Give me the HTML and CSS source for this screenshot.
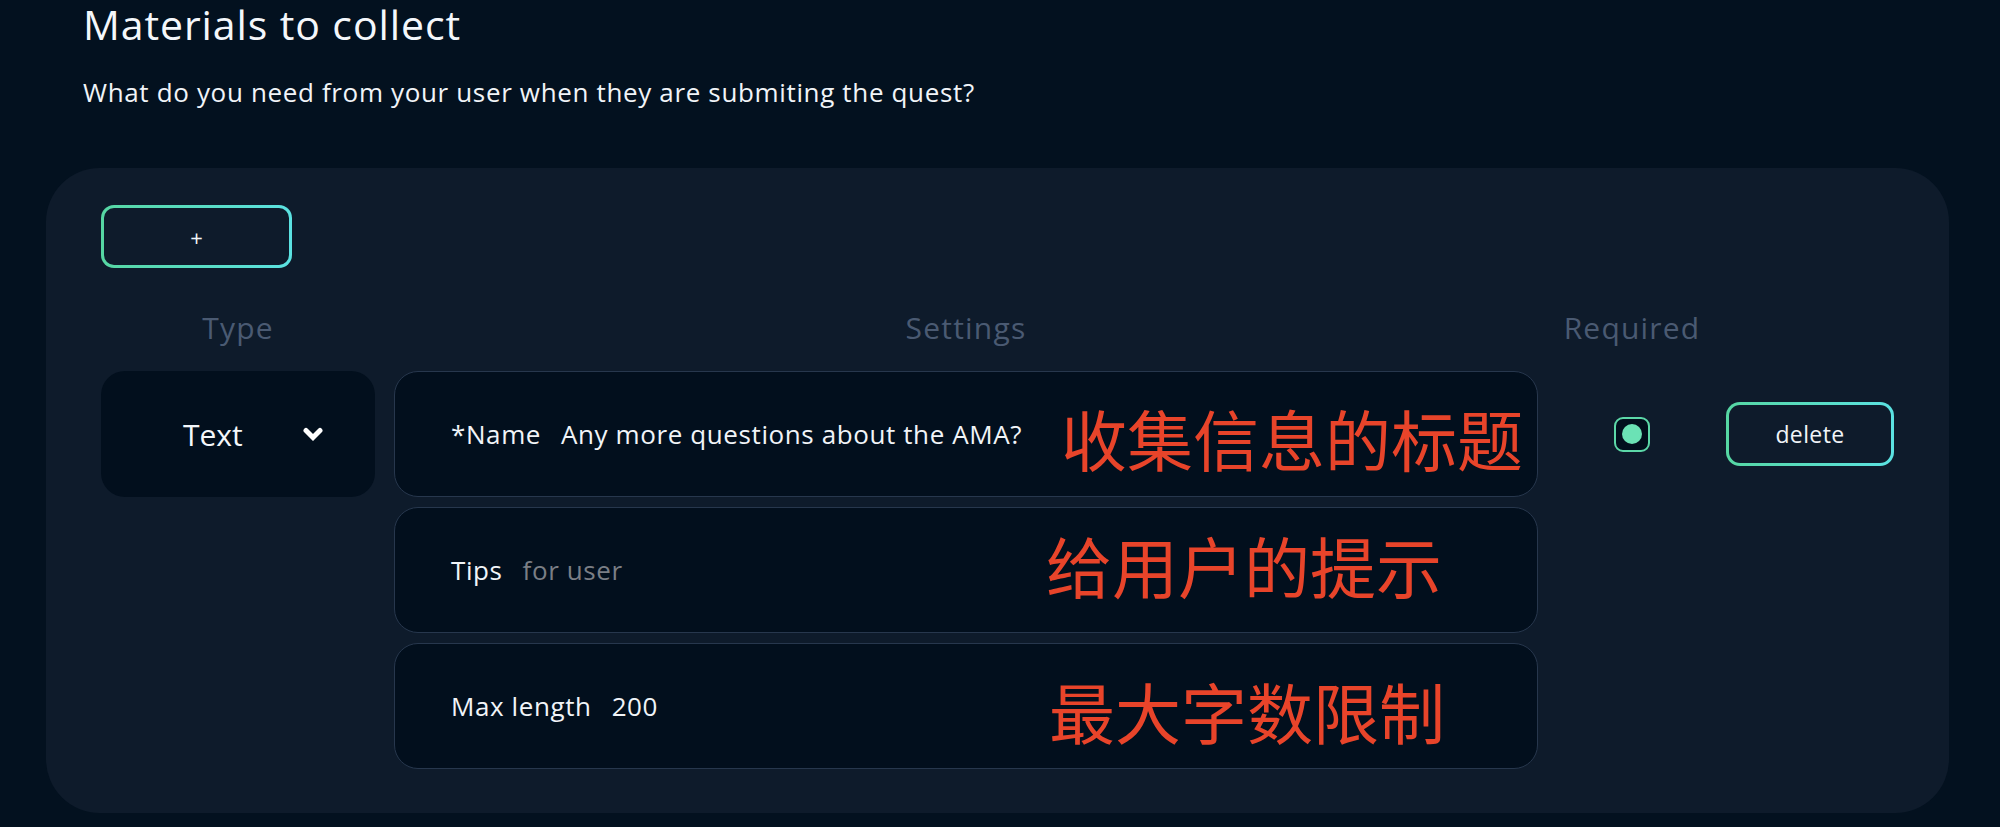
FILE: index.html
```html
<!DOCTYPE html>
<html lang="en">
<head>
<meta charset="utf-8">
<title>Materials to collect</title>
<link rel="stylesheet" href="styles.css">
</head>
<body>
  <header class="intro">
    <h1 class="title">Materials to collect</h1>
    <p class="subtitle">What do you need from your user when they are submiting the quest?</p>
  </header>

  <section class="panel">
    <button class="btn-outline btn-add" type="button">+</button>

    <div class="grid">
      <div class="col-head">Type</div>
      <div class="col-head">Settings</div>
      <div class="col-head">Required</div>
      <div></div>

      <div class="type-select">
        <span class="type-label">Text</span>
        <svg class="chevron" viewBox="0 0 20 14" width="20" height="14" aria-hidden="true">
          <path d="M3 3.5 L10 10.5 L17 3.5" fill="none" stroke="#ffffff" stroke-width="5" stroke-linecap="round" stroke-linejoin="miter"/>
        </svg>
      </div>

      <div class="settings">
        <div class="field">
          <span class="field-label">*Name</span>
          <span class="field-value">Any more questions about the AMA?</span>
          <span class="note note-1">收集信息的标题</span>
        </div>
        <div class="field">
          <span class="field-label">Tips</span>
          <span class="field-value placeholder">for user</span>
          <span class="note note-2">给用户的提示</span>
        </div>
        <div class="field">
          <span class="field-label">Max length</span>
          <span class="field-value">200</span>
          <span class="note note-3">最大字数限制</span>
        </div>
      </div>

      <div class="required-cell">
        <span class="checkbox"><span class="checkbox-dot"></span></span>
      </div>

      <div class="delete-cell">
        <button class="btn-outline btn-delete" type="button">delete</button>
      </div>
    </div>
  </section>
</body>
</html>
```

FILE: styles.css
```css
* {
  box-sizing: border-box;
}

html,
body {
  margin: 0;
  padding: 0;
}

body {
  background: #03111f;
  color: #f1f4f8;
  font-family: "Open Sans", "Noto Sans", "Noto Sans CJK SC", sans-serif;
  width: 2000px;
  height: 827px;
  overflow: hidden;
}

.intro {
  padding-left: 83px;
  padding-top: 2px;
}

.title {
  margin: 0;
  font-size: 41px;
  line-height: 44px;
  font-weight: 400;
  letter-spacing: 0.9px;
  color: #f4f7fb;
}

.subtitle {
  margin: 30px 0 0;
  font-size: 26px;
  line-height: 32px;
  font-weight: 400;
  letter-spacing: 0.65px;
  color: #f1f4f8;
}

.panel {
  margin: 60px 0 0 46px;
  width: 1903px;
  height: 645px;
  background: #0e1b2b;
  border-radius: 54px;
  padding: 37px 0 0 55px;
}

.btn-outline {
  font-family: "Open Sans", "Noto Sans", sans-serif;
  color: #f1f4f8;
  border: 3px solid transparent;
  background:
    linear-gradient(#0e1b2b, #0e1b2b) padding-box,
    linear-gradient(90deg, #56d7a3, #5be2e2) border-box;
  cursor: pointer;
  padding: 0;
  display: flex;
  align-items: center;
  justify-content: center;
}

.btn-add {
  width: 191px;
  height: 63px;
  border-radius: 13px;
  font-size: 22px;
  line-height: 1;
}

.grid {
  display: grid;
  grid-template-columns: 274px 1144px 150px 168px;
  column-gap: 19px;
  margin-top: 40px;
}

.col-head {
  text-align: center;
  font-size: 30px;
  line-height: 40px;
  letter-spacing: 1.2px;
  color: #4a5a72;
  margin-bottom: 23px;
}

.type-select {
  height: 126px;
  background: #020f1d;
  border-radius: 24px;
  display: flex;
  align-items: center;
  justify-content: space-between;
  padding: 0 52px 0 82px;
}

.type-label {
  font-size: 30px;
  color: #f4f7fb;
}

.chevron {
  display: block;
}

.settings {
  display: flex;
  flex-direction: column;
  gap: 10px;
}

.field {
  position: relative;
  height: 126px;
  background: #020f1d;
  border: 1px solid #27374d;
  border-radius: 24px;
  display: flex;
  align-items: center;
  gap: 20px;
  padding-left: 56px;
  font-size: 26px;
  letter-spacing: 0.6px;
}

.field-label {
  color: #f1f4f8;
}

.field-value {
  color: #f1f4f8;
}

.placeholder {
  color: #7a7e85;
}

.note {
  position: absolute;
  font-family: "Noto Sans CJK SC", sans-serif;
  font-size: 66px;
  line-height: 66px;
  letter-spacing: 0;
  color: #e8442a;
  white-space: nowrap;
}

.note-1 {
  left: 666px;
  top: 32px;
}

.note-2 {
  left: 651px;
  top: 23px;
}

.note-3 {
  left: 654px;
  top: 33px;
}

.required-cell {
  height: 126px;
  display: flex;
  align-items: center;
  justify-content: center;
}

.checkbox {
  width: 36px;
  height: 35px;
  border: 2px solid #5cd8a8;
  border-radius: 9px;
  background: #020f1d;
  display: flex;
  align-items: center;
  justify-content: center;
}

.checkbox-dot {
  width: 20px;
  height: 20px;
  border-radius: 50%;
  background: #6be2b5;
}

.delete-cell {
  height: 126px;
  display: flex;
  align-items: center;
}

.btn-delete {
  width: 168px;
  height: 64px;
  border-radius: 14px;
  font-size: 23px;
  letter-spacing: 0.4px;
}
```
